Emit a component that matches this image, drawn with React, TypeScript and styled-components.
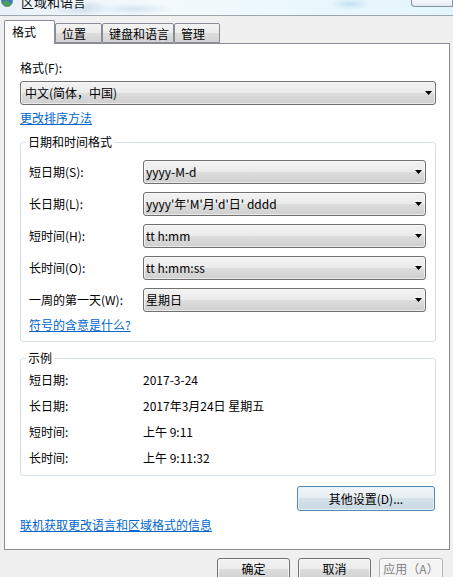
import React from 'react'
import styled, { createGlobalStyle } from 'styled-components'

const GlobalStyle = createGlobalStyle`
  html, body {
    margin: 0;
    padding: 0;
    background: #f0f0f0;
  }
  body {
    font-family: "Noto Sans CJK SC", "Noto Sans", sans-serif;
    font-size: 12px;
    color: #000;
  }
`

const Window = styled.div`
  width: 453px;
  height: 577px;
  overflow: hidden;
  background: #f0f0f0;
  display: flex;
  flex-direction: column;
`

const TitleBar = styled.div`
  height: 15px;
  flex: none;
  overflow: hidden;
  display: flex;
  align-items: flex-start;
  border-bottom: 1px solid #9ea7b0;
  background:
    radial-gradient(ellipse 30px 8px at 80px 8px, rgba(150, 180, 215, 0.45), transparent),
    radial-gradient(ellipse 40px 6px at 135px 9px, rgba(160, 190, 220, 0.35), transparent),
    radial-gradient(ellipse 20px 6px at 350px 4px, rgba(150, 190, 230, 0.4), transparent),
    linear-gradient(90deg, #e8f1f8 0%, #f4fafd 35%, #e9f7fc 70%, #e3f5fb 100%);
`

const AppIcon = styled.svg`
  flex: none;
  margin: -5px 0 0 1px;
`

const Title = styled.span`
  margin: -6px 0 0 8px;
  line-height: 16px;
  font-size: 13px;
  color: #0c1420;
  text-shadow: 0 0 6px #ffffff, 0 0 3px #ffffff;
`

const CaptionButton = styled.div`
  margin-left: auto;
  width: 40px;
  height: 6px;
  border: 1px solid #8794a1;
  border-top: none;
  border-radius: 0 0 0 4px;
  background: linear-gradient(#f6f9fb, #e3eaf0);
`

const TabStrip = styled.div`
  display: flex;
  align-items: flex-end;
  height: 24px;
  margin: 4px 0 -1px;
  padding-left: 4px;
  position: relative;
  z-index: 1;
`

const Tab = styled.div<{ $active?: boolean; $w: number }>`
  box-sizing: border-box;
  width: ${(p) => p.$w}px;
  height: ${(p) => (p.$active ? 24 : 20)}px;
  margin-bottom: ${(p) => (p.$active ? 0 : 1)}px;
  padding: ${(p) => (p.$active ? '0 0 2px 7px' : '2px 0 0 6px')};
  border: 1px solid #898c95;
  border-bottom: ${(p) => (p.$active ? 'none' : '1px solid #898c95')};
  border-radius: 2px 2px 0 0;
  background: ${(p) =>
    p.$active
      ? '#ffffff'
      : 'linear-gradient(#f3f3f3 0%, #ebebeb 50%, #dddddd 50%, #d3d3d3 100%)'};
  display: flex;
  align-items: center;
  line-height: 16px;
`

const Panel = styled.div`
  box-sizing: border-box;
  height: 507px;
  margin: 0 3px 0 4px;
  padding: 0 13px 0 15px;
  border: 1px solid #898c95;
  background: #ffffff;
  display: flex;
  flex-direction: column;
  flex: none;
`

const FieldLabel = styled.div`
  margin-top: 16px;
  line-height: 16px;
`

const Combo = styled.div<{ $pad: number }>`
  box-sizing: border-box;
  height: 24px;
  padding: 0 3px 0 ${(p) => p.$pad}px;
  border: 1px solid #707070;
  border-radius: 3px;
  background: linear-gradient(#f2f2f2 0%, #ebebeb 50%, #dddddd 50%, #cfcfcf 100%);
  box-shadow: inset 0 0 0 1px rgba(255, 255, 255, 0.55);
  display: flex;
  align-items: center;
  justify-content: space-between;
  line-height: 16px;
  white-space: nowrap;
`

const FormatCombo = styled(Combo)`
  margin-top: 5px;
`

const Link = styled.a<{ $top: number }>`
  align-self: flex-start;
  margin-top: ${(p) => p.$top}px;
  line-height: 16px;
  color: #0066cc;
  text-decoration: underline;
  cursor: pointer;
`

const Group = styled.fieldset<{ $pad: string }>`
  margin: 8px 0 0;
  min-width: 0;
  padding: ${(p) => p.$pad};
  border: 1px solid #d5dfe5;
  border-radius: 3px;
  display: flex;
  flex-direction: column;
`

const Legend = styled.legend`
  margin-left: -3px;
  padding: 0 2px;
  line-height: 16px;
`

const FormGrid = styled.div`
  display: grid;
  grid-template-columns: 114px 1fr;
  row-gap: 8px;
  align-items: center;
`

const SampleGrid = styled.div`
  display: grid;
  grid-template-columns: 114px 1fr;
  grid-auto-rows: 26px;
  align-items: center;
  line-height: 16px;
`

const RowLabel = styled.div`
  line-height: 16px;
`

const Button = styled.div<{ $w: number; $disabled?: boolean }>`
  box-sizing: border-box;
  width: ${(p) => p.$w}px;
  height: 23px;
  padding-bottom: 2px;
  border: 1px solid ${(p) => (p.$disabled ? '#adb2b5' : '#707070')};
  border-radius: 3px;
  background: ${(p) =>
    p.$disabled
      ? '#f4f4f4'
      : 'linear-gradient(#f2f2f2 0%, #ebebeb 50%, #dddddd 50%, #cfcfcf 100%)'};
  box-shadow: inset 0 0 0 1px rgba(255, 255, 255, 0.7);
  color: ${(p) => (p.$disabled ? '#838383' : '#000')};
  display: flex;
  align-items: center;
  justify-content: center;
  line-height: 16px;
  flex: none;
`

const MoreButton = styled(Button)`
  align-self: flex-end;
  height: 25px;
  margin: 10px 1px 0 0;
  padding-bottom: 0;
  border-color: #5d87aa;
  background: linear-gradient(#f1f6f9 0%, #e6eef4 50%, #d6e2ea 50%, #c9d8e2 100%);
  box-shadow: inset 0 0 0 1px rgba(226, 245, 255, 0.9);
`

const Footer = styled.div`
  display: flex;
  justify-content: flex-end;
  gap: 8px;
  margin: 8px 10px 0 0;
`

const Arrow = () => (
  <svg width="7" height="4" viewBox="0 0 7 4">
    <path d="M0 0 H7 L3.5 4 Z" fill="#000" />
  </svg>
)

const formatRows = [
  { label: '短日期(S):', value: 'yyyy-M-d' },
  { label: '长日期(L):', value: "yyyy'年'M'月'd'日' dddd" },
  { label: '短时间(H):', value: 'tt h:mm' },
  { label: '长时间(O):', value: 'tt h:mm:ss' },
  { label: '一周的第一天(W):', value: '星期日' },
]

const samples = [
  { label: '短日期:', value: '2017-3-24' },
  { label: '长日期:', value: '2017年3月24日 星期五' },
  { label: '短时间:', value: '上午 9:11' },
  { label: '长时间:', value: '上午 9:11:32' },
]

const tabs = [
  { name: '格式', w: 51, active: true },
  { name: '位置', w: 47 },
  { name: '键盘和语言', w: 72 },
  { name: '管理', w: 46 },
]

export default function App() {
  return (
    <>
      <GlobalStyle />
      <Window>
        <TitleBar>
          <AppIcon width="12" height="12" viewBox="0 0 12 12">
            <circle cx="6" cy="6" r="5.5" fill="#3b78c4" />
            <path d="M2 7 Q4 4 6 6 T10 8 L9 11 Q5 12 2 9 Z" fill="#4aa34a" />
            <circle cx="6" cy="6" r="5.5" fill="none" stroke="#6a7f96" strokeWidth="0.8" />
          </AppIcon>
          <Title>区域和语言</Title>
          <CaptionButton />
        </TitleBar>

        <TabStrip>
          {tabs.map((t) => (
            <Tab key={t.name} $w={t.w} $active={t.active}>
              {t.name}
            </Tab>
          ))}
        </TabStrip>

        <Panel>
          <FieldLabel>格式(F):</FieldLabel>
          <FormatCombo $pad={4}>
            <span>中文(简体，中国)</span>
            <Arrow />
          </FormatCombo>
          <Link $top={5}>更改排序方法</Link>

          <Group $pad="10px 9px 8px 8px">
            <Legend>日期和时间格式</Legend>
            <FormGrid>
              {formatRows.map((r) => (
                <React.Fragment key={r.label}>
                  <RowLabel>{r.label}</RowLabel>
                  <Combo $pad={2}>
                    <span>{r.value}</span>
                    <Arrow />
                  </Combo>
                </React.Fragment>
              ))}
            </FormGrid>
            <Link $top={5}>符号的含意是什么?</Link>
          </Group>

          <Group $pad="1px 9px 4px 8px">
            <Legend>示例</Legend>
            <SampleGrid>
              {samples.map((s) => (
                <React.Fragment key={s.label}>
                  <div>{s.label}</div>
                  <div>{s.value}</div>
                </React.Fragment>
              ))}
            </SampleGrid>
          </Group>

          <MoreButton $w={138}>其他设置(D)...</MoreButton>
          <Link $top={6}>联机获取更改语言和区域格式的信息</Link>
        </Panel>

        <Footer>
          <Button $w={73}>确定</Button>
          <Button $w={73}>取消</Button>
          <Button $w={64} $disabled>
            应用（A）
          </Button>
        </Footer>
      </Window>
    </>
  )
}
